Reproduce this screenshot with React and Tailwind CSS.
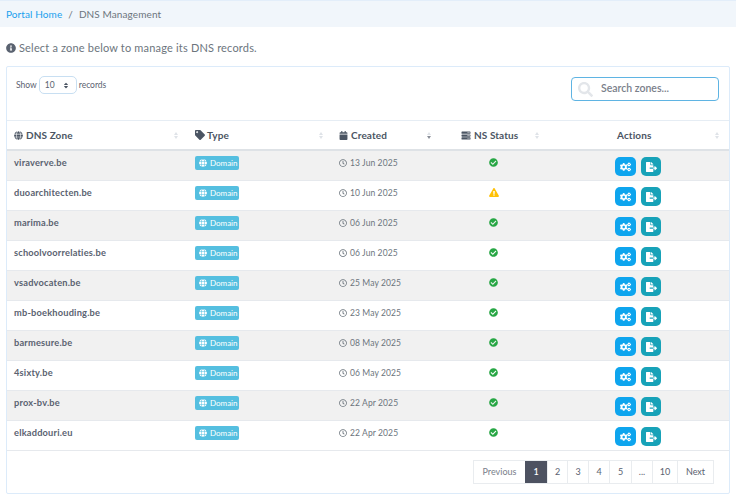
import React from "react";
import { FaGlobe, FaTag, FaCalendar, FaServer, FaCogs, FaFileExport, FaRegClock, FaCheckCircle, FaExclamationTriangle, FaInfoCircle, FaSearch, FaSort } from "react-icons/fa";

const rows = [
  ["viraverve.be", "13 Jun 2025", true],
  ["duoarchitecten.be", "10 Jun 2025", false],
  ["marima.be", "06 Jun 2025", true],
  ["schoolvoorrelaties.be", "06 Jun 2025", true],
  ["vsadvocaten.be", "25 May 2025", true],
  ["mb-boekhouding.be", "23 May 2025", true],
  ["barmesure.be", "08 May 2025", true],
  ["4sixty.be", "06 May 2025", true],
  ["prox-bv.be", "22 Apr 2025", true],
  ["elkaddouri.eu", "22 Apr 2025", true],
];

function Sort({ active }) {
  return (
    <span className="flex flex-col gap-[1px] ml-auto">
      <span className="w-0 h-0 border-x-[2.5px] border-x-transparent border-b-[3px] border-b-[#dfe3e8]" />
      <span className={active ? "w-0 h-0 border-x-[2.5px] border-x-transparent border-t-[3px] border-t-[#8a8f98]" : "w-0 h-0 border-x-[2.5px] border-x-transparent border-t-[3px] border-t-[#dfe3e8]"} />
    </span>
  );
}

const pages = ["Previous", "1", "2", "3", "4", "5", "...", "10", "Next"];
const pageWidths = ["w-[51px]", "w-[22px]", "w-[20px]", "w-[21px]", "w-[21px]", "w-[22px]", "w-[21px]", "w-[25px]", "w-[36px]"];

export default function App() {
  return (
    <div className="w-[736px] h-[502px] overflow-hidden bg-white font-['Lato','Noto_Sans',sans-serif] text-[#5a6270]">
      <div className="h-[27px] bg-[#f1f6fb] border-t border-t-[#e3eefa] flex items-center pl-[6px] text-[10px] tracking-[0.1px]">
        <span className="text-[#18a0ee]">Portal Home</span>
        <span className="mx-[6px] text-[#6c757d]">/</span>
        <span className="text-[#6c757d]">DNS Management</span>
      </div>
      <div className="flex items-center gap-[3px] pl-[6px] mt-[14px] h-[14px] text-[11px] tracking-[0.18px] text-[#6c757d]">
        <FaInfoCircle className="w-[10px] h-[10px] text-[#5a6270]" />
        <span>Select a zone below to manage its DNS records.</span>
      </div>
      <div className="mx-[6px] mt-[11px] w-[724px] h-[428px] border border-[#dcebfa] rounded-[2px] flex flex-col">
        <div className="h-[53px] flex justify-between pl-[9px] pr-[10px] shrink-0">
          <div className="flex items-center h-[36px] text-[8.5px] gap-[2px]">
            <span>Show</span>
            <span className="w-[38px] h-[18px] border border-[#c8dff2] rounded-[5px] flex items-center justify-between pl-[5px] pr-[7px]">
              10
              <FaSort className="w-[6px] h-[7px] text-[#4b5563]" />
            </span>
            <span>records</span>
          </div>
          <div className="mt-[10px] w-[148px] h-[24px] border border-[#5fb4e3] rounded-[4px] flex items-center pl-[6px] text-[10.5px] text-[#7a808a] font-semibold">
            <FaSearch className="w-[15px] h-[15px] text-[#e3e6ea] mr-[8px]" />
            Search zones...
          </div>
        </div>
        <div className="flex h-[31px] items-center text-[10px] font-bold text-[#4b5563] border-t border-t-[#e6edf4] border-b-2 border-b-[#dee2e6] shrink-0 tracking-[0.1px]">
          <div className="w-[180px] pl-[7px] pr-[9px] flex items-center gap-[3px]"><FaGlobe className="w-[9px] h-[9px]" />DNS Zone<Sort /></div>
          <div className="w-[144px] pl-[8px] pr-[8px] flex items-center gap-[2px]"><FaTag className="w-[10px] h-[10px]" />Type<Sort /></div>
          <div className="w-[102px] pl-[8px] pr-[2px] flex items-center gap-[3px]"><FaCalendar className="w-[9px] h-[9px]" />Created<Sort active /></div>
          <div className="w-[112px] pl-[28px] pr-[6px] flex items-center gap-[3px]"><FaServer className="w-[10px] h-[9px]" />NS Status<Sort /></div>
          <div className="flex-1 flex items-center pr-[10px] pl-[72px]">Actions<Sort /></div>
        </div>
        {rows.map((r, i) => (
          <div key={r[0]} className={i % 2 === 0 ? "flex h-[30px] items-start bg-[#f1f1f1] border-b border-b-[#e6e9ed] shrink-0" : "flex h-[30px] items-start bg-white border-b border-b-[#e6e9ed] shrink-0"}>
            <div className="w-[180px] pl-[7px] pt-[5px] text-[9.25px] font-bold text-[#5a6270] tracking-[0.2px]">{r[0]}</div>
            <div className="w-[144px] pl-[8px] pt-[5px]">
              <span className="flex items-center gap-[3px] h-[14px] pl-[4px] w-[44px] rounded-[2px] bg-[#55bfe0] text-white text-[8px]">
                <FaGlobe className="w-[8px] h-[8px]" />Domain
              </span>
            </div>
            <div className="w-[102px] pl-[8px] pt-[6px] flex items-center gap-[3px] text-[8.5px] text-[#6c757d] tracking-[0.1px]">
              <FaRegClock className="w-[8px] h-[8px]" />{r[1]}
            </div>
            <div className="w-[112px] pt-[7px] pl-[56px]">
              {r[2] ? <FaCheckCircle className="w-[9px] h-[9px] text-[#28a745]" /> : <FaExclamationTriangle className="w-[10px] h-[9px] text-[#ffc107]" />}
            </div>
            <div className="flex-1 flex gap-[5px] pl-[70px] pt-[6px]">
              <span className="w-[21px] h-[19px] rounded-[5px] bg-[#0ea5ee] flex items-center justify-center text-white"><FaCogs className="w-[11px] h-[10px]" /></span>
              <span className="w-[20px] h-[19px] rounded-[5px] bg-[#17a2b8] flex items-center justify-center text-white"><FaFileExport className="w-[11px] h-[10px]" /></span>
            </div>
          </div>
        ))}
        <div className="flex justify-end pr-[16px] pt-[10px]">
          <div className="flex h-[22px] text-[9px] text-[#5a6270] outline outline-[#e9ecef]">
            {pages.map((p, i) => {
              const c = p === "1" ? "bg-[#4d5261] text-white font-semibold" : p === "Previous" ? "text-[#7a808a]" : "";
              return <span key={p} className={`${pageWidths[i]} ${c} ${i && p !== "1" ? "border-l border-l-[#e9ecef]" : ""} flex items-center justify-center`}>{p}</span>;
            })}
          </div>
        </div>
      </div>
    </div>
  );
}
